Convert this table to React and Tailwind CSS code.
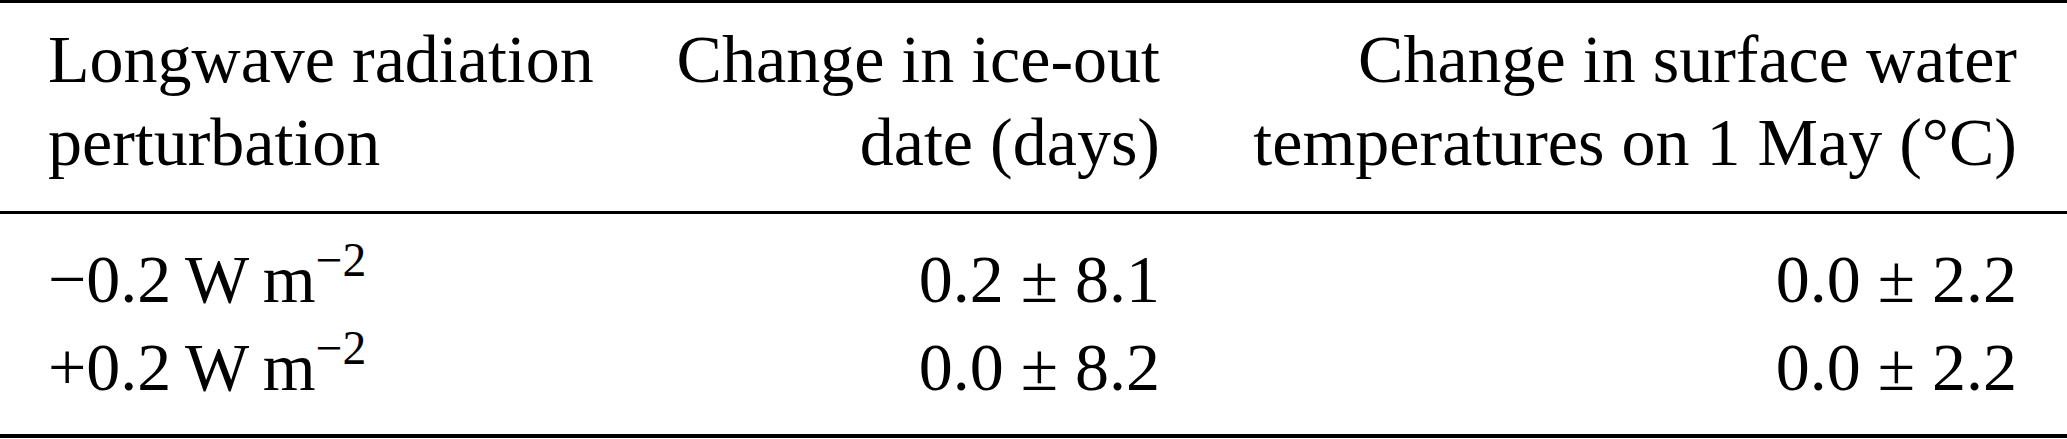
import React from 'react';

const rows = [
    { sign: '\u2212', ice: '0.2 \u00b1 8.1', temp: '0.0 \u00b1 2.2' },
    { sign: '+', ice: '0.0 \u00b1 8.2', temp: '0.0 \u00b1 2.2' },
];

const Flux = ({ sign }) => (
    <span>
        {sign}0.2{'\u2009'}W{'\u2009'}m
        <span className="relative -top-[0.55em] text-[0.7em] leading-none">{'\u2212'}2</span>
    </span>
);

const App = () => {
    return (
        <div className="w-[2067px] h-[439px] bg-white text-black font-['Liberation_Serif','Times_New_Roman',serif] text-[68px]">
            {/* top rule */}
            <div className="h-[3px] bg-black"></div>

            <div className="grid grid-cols-[572px_540px_857px] pl-[48px] pt-[15px] pb-[27px] leading-[83px] whitespace-nowrap">
                <div>
                    Longwave radiation
                    <br />
                    perturbation
                </div>
                <div className="text-right">
                    Change in ice-out
                    <br />
                    date (days)
                </div>
                <div className="text-right">
                    Change in surface water
                    <br />
                    temperatures on 1 May ({'\u00b0'}C)
                </div>
            </div>

            {/* mid rule */}
            <div className="h-[3px] bg-black"></div>

            <div className="grid grid-cols-[572px_540px_857px] pl-[48px] pt-[21px] pb-[23px] leading-[88px] whitespace-nowrap">
                {rows.map((row) => (
                    <React.Fragment key={row.sign}>
                        <div><Flux sign={row.sign} /></div>
                        <div className="text-right">{row.ice}</div>
                        <div className="text-right">{row.temp}</div>
                    </React.Fragment>
                ))}
            </div>

            {/* bottom rule */}
            <div className="h-[4px] bg-black"></div>
        </div>
    );
};

export default App;
